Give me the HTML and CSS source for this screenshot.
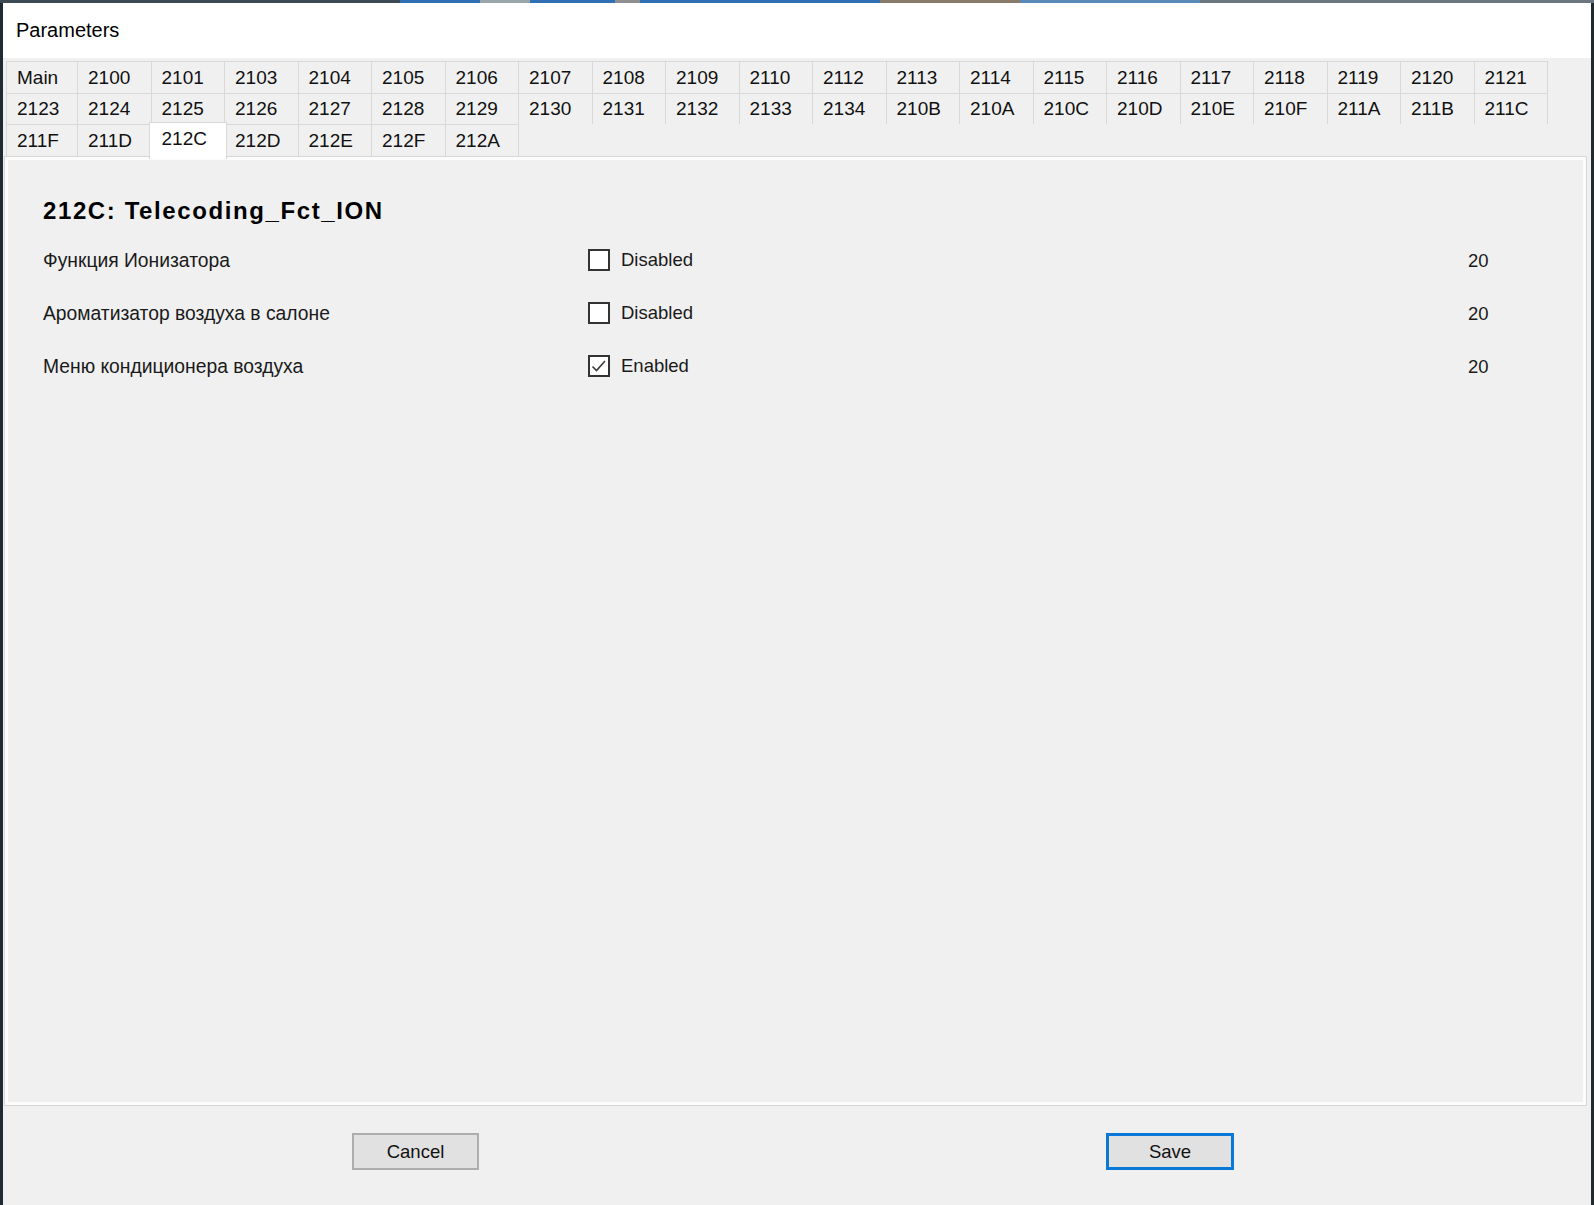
FILE: index.html
```html
<!DOCTYPE html>
<html lang="en">
<head>
    <meta charset="UTF-8">
    <title>Parameters</title>
    <link rel="stylesheet" href="styles.css">
</head>
<body>
<div class="desktop-strip"></div>
<div class="window">
    <div class="titlebar">Parameters</div>

    <div class="tabs">
        <div class="tab">Main</div>
        <div class="tab">2100</div>
        <div class="tab">2101</div>
        <div class="tab">2103</div>
        <div class="tab">2104</div>
        <div class="tab">2105</div>
        <div class="tab">2106</div>
        <div class="tab">2107</div>
        <div class="tab">2108</div>
        <div class="tab">2109</div>
        <div class="tab">2110</div>
        <div class="tab">2112</div>
        <div class="tab">2113</div>
        <div class="tab">2114</div>
        <div class="tab">2115</div>
        <div class="tab">2116</div>
        <div class="tab">2117</div>
        <div class="tab">2118</div>
        <div class="tab">2119</div>
        <div class="tab">2120</div>
        <div class="tab">2121</div>

        <div class="tab">2123</div>
        <div class="tab">2124</div>
        <div class="tab">2125</div>
        <div class="tab">2126</div>
        <div class="tab">2127</div>
        <div class="tab">2128</div>
        <div class="tab">2129</div>
        <div class="tab">2130</div>
        <div class="tab">2131</div>
        <div class="tab">2132</div>
        <div class="tab">2133</div>
        <div class="tab">2134</div>
        <div class="tab">210B</div>
        <div class="tab">210A</div>
        <div class="tab">210C</div>
        <div class="tab">210D</div>
        <div class="tab">210E</div>
        <div class="tab">210F</div>
        <div class="tab">211A</div>
        <div class="tab">211B</div>
        <div class="tab">211C</div>

        <div class="tab">211F</div>
        <div class="tab">211D</div>
        <div class="tab selected">212C</div>
        <div class="tab">212D</div>
        <div class="tab">212E</div>
        <div class="tab">212F</div>
        <div class="tab">212A</div>
    </div>

    <div class="page">
        <h1 class="page-title">212C: Telecoding_Fct_ION</h1>
        <div class="params">
            <div class="param-name">Функция Ионизатора</div>
            <label class="check">
                <span class="box"></span>
                <span>Disabled</span>
            </label>
            <div class="param-value">20</div>

            <div class="param-name">Ароматизатор воздуха в салоне</div>
            <label class="check">
                <span class="box"></span>
                <span>Disabled</span>
            </label>
            <div class="param-value">20</div>

            <div class="param-name">Меню кондиционера воздуха</div>
            <label class="check">
                <span class="box">
                    <svg width="18" height="18" viewBox="0 0 18 18"><path d="M2.5 9.5 L6.5 13.5 L15 4" fill="none" stroke="#3a3a3a" stroke-width="1.6"/></svg>
                </span>
                <span>Enabled</span>
            </label>
            <div class="param-value">20</div>
        </div>
    </div>

    <div class="footer">
        <button class="btn">Cancel</button>
        <button class="btn primary">Save</button>
    </div>
</div>
</body>
</html>
```

FILE: styles.css
```css
* { box-sizing: border-box; }

body {
    margin: 0;
    background: #1f2a31;
    font-family: "Liberation Sans", Arial, sans-serif;
    color: #111;
    overflow: hidden;
}

.desktop-strip {
    height: 3px;
    background: linear-gradient(90deg, #3b4a55 0 400px, #2f6fb4 400px 480px, #9aa4ab 480px 530px, #2f6fb4 530px 615px, #8d8f90 615px 640px, #2f6fb4 640px 880px, #8a7a6a 880px 1020px, #5b8ab8 1020px 1200px, #6b7680 1200px 1594px);
}

.window {
    margin-left: 3px;
    width: 1588px;
    height: 1202px;
    background: #f0f0f0;
    display: flex;
    flex-direction: column;
}

.titlebar {
    height: 55px;
    flex: none;
    background: #fff;
    display: flex;
    align-items: center;
    padding-left: 13px;
    font-size: 20px;
    color: #000;
}

/* multiline tab header, three rows */
.tabs {
    display: grid;
    grid-template-columns: 71px repeat(20, 73.5px);
    grid-auto-rows: 31.5px;
    padding: 3px 0 0 4px;
    font-size: 19px;
    color: #111;
    flex: none;
}
.tab {
    border: 1px solid #d9d9d9;
    border-bottom: none;
    margin-left: -1px;
    display: flex;
    align-items: center;
    padding: 1px 0 0 10px;
    background: #f0f0f0;
}
.tab.selected {
    background: #fff;
    margin: -2px -2px -3px -3px;
    padding: 0 0 3px 12px;
    position: relative;
    z-index: 2;
}

.page {
    flex: 1;
    margin: 0 4px 0 1px;
    background: #f0f0f0;
    border: 1px solid #d6d6d6;
    box-shadow: inset 0 0 0 3px #fcfcfc;
    padding: 39px 0 0 38px;
    position: relative;
    z-index: 1;
}

.page-title {
    margin: 0;
    font-size: 24px;
    line-height: 30px;
    letter-spacing: 1.6px;
    font-weight: bold;
    color: #000;
}

.params {
    margin-top: 9px;
    display: grid;
    grid-template-columns: 545px 880px auto;
    grid-auto-rows: 53px;
    align-items: center;
    font-size: 18.5px;
    color: #1a1a1a;
}
.param-name { font-size: 19.3px; }

.check {
    display: flex;
    align-items: center;
    gap: 11px;
    margin-top: -3px;
}
.box {
    width: 22px;
    height: 22px;
    border: 2px solid #333;
    background: #fff;
    display: flex;
}

.footer {
    height: 99px;
    flex: none;
    display: flex;
    align-items: flex-start;
    padding: 27px 0 0 349px;
    gap: 627px;
}
.btn {
    width: 127px;
    height: 37px;
    background: #e1e1e1;
    border: 2px solid #adadad;
    font-family: "Liberation Sans", Arial, sans-serif;
    font-size: 18.5px;
    color: #111;
    padding: 0;
}
.btn.primary {
    width: 128px;
    border: 3px solid #0a78d7;
}
```
